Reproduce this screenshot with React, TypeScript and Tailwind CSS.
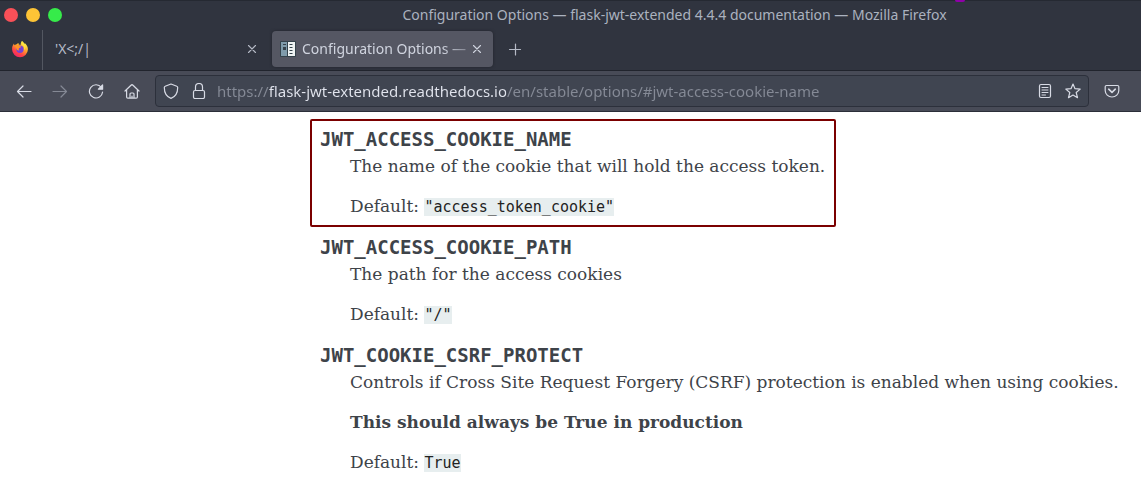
import type { ReactNode } from "react";

const iconProps = {
  width: 16,
  height: 16,
  viewBox: "0 0 16 16",
  fill: "none",
  stroke: "currentColor",
  strokeWidth: 1.2,
  strokeLinecap: "round" as const,
  strokeLinejoin: "round" as const,
  "aria-hidden": true,
};

function FirefoxLogo() {
  return (
    <svg width="18" height="18" viewBox="0 0 18 18" aria-hidden="true">
      <defs>
        <linearGradient id="flame" x1="0.8" y1="0" x2="0.2" y2="1">
          <stop offset="0.1" stopColor="#fff04a" />
          <stop offset="0.4" stopColor="#ffa52a" />
          <stop offset="0.7" stopColor="#ff4545" />
          <stop offset="1" stopColor="#ee1d70" />
        </linearGradient>
      </defs>
      <path
        d="M11 1c1 1 2 1.700 2.600 3l.4-.8c2 1.800 3 4 2.900 6.300A7.900 7.900 0 0 1 9 17.200 7.900 7.900 0 0 1 1.100 9.500C1 7 1.800 5 3 3.600l.4 1.600 1.900-.7c.8-.9 1.700-1.400 2.200-1.500L7.700 4.500 9.600 5c.1-1.600.5-3 1.400-4z"
        fill="url(#flame)"
      />
      <circle cx="9" cy="9.300" r="3.700" fill="#7542d5" />
      <path d="M3.500 5.200c1.800-.8 3.700-.4 4.700.9l2 .5c-.2 1-1.300 1.300-2.200 1.600-.5.700-.4 1.700.5 2.200-1.700.5-3.300-.6-3.300-2.400z" fill="#ff9425" />
      <path d="M11 1c-.7 2 .1 3.200 1.200 4.300 1.200 1.300 1.400 3.300.4 4.900 2.200-.9 2.600-4 1-5.900C13 3 11.700 2 11 1z" fill="#ffe43f" />
    </svg>
  );
}

function DocsFavicon() {
  return (
    <svg width="16" height="16" viewBox="0 0 16 16" className="shrink-0" aria-hidden="true">
      <rect width="16" height="16" rx="1" fill="#34424b" />
      <rect x="1" y="1" width="6" height="14" fill="#7f9bab" />
      <rect x="3" y="3" width="3" height="1" fill="#34424b" />
      <rect x="3" y="6" width="3" height="3" fill="#34424b" />
      <rect x="8" y="1" width="7" height="14" fill="#eef3f3" />
      <path d="M9.500 3.500h3M9.500 6.500h3M9.500 9.500h3M9.500 12.500h3" stroke="#34424b" strokeWidth="1" />
    </svg>
  );
}

function CloseIcon() {
  return (
    <svg width="10" height="10" viewBox="0 0 10 10" stroke="currentColor" strokeWidth="1.1" strokeLinecap="round" aria-hidden="true">
      <path d="M1.500 1.500l7 7M8.500 1.500l-7 7" />
    </svg>
  );
}

function IconButton({ label, disabled, children }: { label: string; disabled?: boolean; children: ReactNode }) {
  return (
    <button
      type="button"
      aria-label={label}
      disabled={disabled}
      className="flex size-7 shrink-0 items-center justify-center rounded text-[#d8dbe5] disabled:text-[#858995]"
    >
      {children}
    </button>
  );
}

function TitleBar() {
  return (
    <div className="flex h-[30px] items-center border-t border-[#252932] pb-0.5">
      <div className="flex w-[208px] shrink-0 gap-2 pl-1">
        <button type="button" aria-label="Close window" className="size-3.5 rounded-full bg-[#f85058]" />
        <button type="button" aria-label="Minimize window" className="size-3.5 rounded-full bg-[#fdc436]" />
        <button type="button" aria-label="Maximize window" className="size-3.5 rounded-full bg-[#36eb4a]" />
      </div>
      <h1 className="min-w-0 flex-1 truncate text-center text-sm text-[#abb2bf]">
        Configuration Options — flask-jwt-extended 4.4.4 documentation — Mozilla Firefox
      </h1>
    </div>
  );
}

function TabStrip() {
  return (
    <div className="flex h-[41px] border-b border-[#21242d] text-sm text-[#b5bac6]">
      <button type="button" aria-label="Firefox View" className="flex w-[43px] shrink-0 items-center justify-center border-r border-[#535761] pr-0.5 pb-0.5">
        <FirefoxLogo />
      </button>
      <div className="flex w-[225px] items-center justify-between pr-[7px] pb-0.5 pl-3">
        <button type="button">'X&lt;;/|</button>
        <button type="button" aria-label="Close tab" className="p-1">
          <CloseIcon />
        </button>
      </div>
      <div className="mt-px mb-[3px] ml-1 flex w-[221px] items-center rounded bg-[#555763] pr-[11px] pl-2 text-[#d0d4df] shadow-[0_0_3px_#20232b]">
        <button type="button" className="flex min-w-0 flex-1 items-center gap-1.5">
          <DocsFavicon />
          <span className="whitespace-nowrap [mask-image:linear-gradient(to_right,black_85%,#0006)]">
            Configuration Options —
          </span>
        </button>
        <button type="button" aria-label="Close current tab" className="p-1 pr-0">
          <CloseIcon />
        </button>
      </div>
      <button type="button" aria-label="New tab" className="ml-2 flex w-7 items-center justify-center pb-0.5">
        <svg width="14" height="14" viewBox="0 0 14 14" stroke="currentColor" strokeWidth="1.2" strokeLinecap="round" aria-hidden="true">
          <path d="M1.500 7.500h11M7.500 2v11" />
        </svg>
      </button>
    </div>
  );
}

function Toolbar() {
  return (
    <div className="flex h-[41px] items-center border-b border-[#2b2e39] bg-[#484b57] pr-[15px] pl-[10px]">
      <nav aria-label="Navigation" className="flex gap-2">
        <IconButton label="Back">
          <svg {...iconProps}>
            <path d="M15 8.500H1.500M7 3L1.500 8.500 7 14" />
          </svg>
        </IconButton>
        <IconButton label="Forward" disabled>
          <svg {...iconProps}>
            <path d="M1 8.500h13.500M9 3l5.500 5.500L9 14" />
          </svg>
        </IconButton>
        <IconButton label="Reload">
          <svg {...iconProps}>
            <path d="M13.400 4.500A6.600 6.600 0 1 0 14.600 9" />
            <path d="M14.600 2v4.200h-4.200z" fill="currentColor" />
          </svg>
        </IconButton>
        <IconButton label="Home">
          <svg {...iconProps}>
            <path d="M1 8L7 2.200q1-.9 2 0L15 8M2.600 7v7q0 1.200 1.200 1.200h8.400q1.200 0 1.200-1.200V7M6 15v-4q0-1 1-1h2q1 0 1 1v4M8 15v-2" />
          </svg>
        </IconButton>
      </nav>
      <div className="ml-[9px] flex h-8 min-w-0 flex-1 items-center rounded border border-[#2c303b] bg-[#404551] px-px">
        <IconButton label="Site protections">
          <svg {...iconProps}>
            <path d="M8 1L2.200 3.200Q1.300 3.500 1.300 4.500C1.300 9.500 3.500 13.700 8 15.400c4.500-1.700 6.700-5.900 6.700-10.900q0-1-.9-1.300z" />
          </svg>
        </IconButton>
        <IconButton label="Connection security">
          <svg {...iconProps}>
            <rect x="2.500" y="7.500" width="11" height="8" rx="1.500" />
            <path d="M4.500 7.500V4a3.500 3.500 0 0 1 7 0v3.500" />
          </svg>
        </IconButton>
        <input
          type="text"
          aria-label="Address"
          defaultValue="https://flask-jwt-extended.readthedocs.io/en/stable/options/#jwt-access-cookie-name"
          className="ml-1 min-w-0 flex-1 bg-[linear-gradient(to_right,#858a96_52px,#e2e5ee_52px,#e2e5ee_289px,#858a96_289px)] bg-clip-text text-[15px] text-transparent caret-white outline-none"
        />
        <IconButton label="Reader view">
          <svg {...iconProps}>
            <rect x="2.500" y="1.500" width="11" height="13" rx="1.500" />
            <path d="M5 4.500h6M5 7h6M5 9.500h6M5 12h3.500" strokeWidth="1" />
          </svg>
        </IconButton>
        <IconButton label="Bookmark page">
          <svg {...iconProps}>
            <path d="M8 1l2 4.700 5.200.4-4 3.400 1.300 5.200L8 12l-4.500 2.700 1.300-5.200-4-3.400L6 5.700z" />
          </svg>
        </IconButton>
      </div>
      <div className="ml-[9px]">
        <IconButton label="Save to Pocket">
          <svg {...iconProps}>
            <path d="M2.500 2.500h11q1.300 0 1.300 1.300V7.500a6.800 6.500 0 0 1-13.600 0V3.800q0-1.300 1.300-1.300z" />
            <path d="M4.700 6.200L8 9.300l3.300-3.100" strokeWidth="1.600" />
          </svg>
        </IconButton>
      </div>
    </div>
  );
}

function Option({ name, value, highlighted, children }: { name: string; value: string; highlighted?: boolean; children: ReactNode }) {
  return (
    <div className={`w-fit border-2 pt-[5px] pr-[9px] pb-[7px] pl-2 ${highlighted ? "rounded-xs border-[#7b0000]" : "border-transparent"}`}>
      <dt className="font-['DejaVu_Sans_Mono',monospace] text-[19px] leading-[26px] font-bold">{name}</dt>
      <dd className="mt-0.5 ml-[30px] flex flex-col gap-4">
        {children}
        <p>
          Default:{" "}
          <code className="bg-[#e7eeef] font-['DejaVu_Sans_Mono',monospace] text-[15px] leading-none text-[#222222]">{value}</code>
        </p>
      </dd>
    </div>
  );
}

export default function App() {
  return (
    <div className="min-h-screen bg-white">
      <header className="relative bg-[#30343f] font-['Noto_Sans',sans-serif]">
        <span className="absolute top-0 left-[955px] h-0.5 w-2.5 rounded-b-full bg-[#8f00a8]" />
        <TitleBar />
        <TabStrip />
        <Toolbar />
      </header>
      <main className="pt-[7px] pl-[310px] font-['DejaVu_Serif',serif] text-[17px] leading-6 text-[#3e4349]">
        <dl>
          <Option name="JWT_ACCESS_COOKIE_NAME" value={'"access_token_cookie"'} highlighted>
            <p>The name of the cookie that will hold the access token.</p>
          </Option>
          <Option name="JWT_ACCESS_COOKIE_PATH" value={'"/"'}>
            <p>The path for the access cookies</p>
          </Option>
          <Option name="JWT_COOKIE_CSRF_PROTECT" value="True">
            <p>Controls if Cross Site Request Forgery (CSRF) protection is enabled when using cookies.</p>
            <p className="font-bold">This should always be True in production</p>
          </Option>
        </dl>
      </main>
    </div>
  );
}
